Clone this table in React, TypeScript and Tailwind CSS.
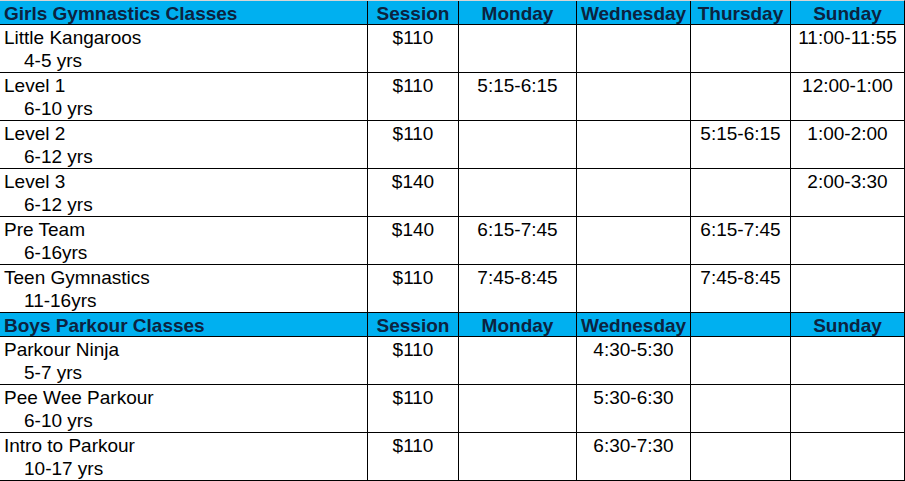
type Row = {
  name: string
  age: string
  price: string
  times: string[]
}

const girls: Row[] = [
  { name: 'Little Kangaroos', age: '4-5 yrs', price: '$110', times: ['', '', '', '11:00-11:55'] },
  { name: 'Level 1', age: '6-10 yrs', price: '$110', times: ['5:15-6:15', '', '', '12:00-1:00'] },
  { name: 'Level 2', age: '6-12 yrs', price: '$110', times: ['', '', '5:15-6:15', '1:00-2:00'] },
  { name: 'Level 3', age: '6-12 yrs', price: '$140', times: ['', '', '', '2:00-3:30'] },
  { name: 'Pre Team', age: '6-16yrs', price: '$140', times: ['6:15-7:45', '', '6:15-7:45', ''] },
  { name: 'Teen Gymnastics', age: '11-16yrs', price: '$110', times: ['7:45-8:45', '', '7:45-8:45', ''] },
]

const boys: Row[] = [
  { name: 'Parkour Ninja', age: '5-7 yrs', price: '$110', times: ['', '4:30-5:30', '', ''] },
  { name: 'Pee Wee Parkour', age: '6-10 yrs', price: '$110', times: ['', '5:30-6:30', '', ''] },
  { name: 'Intro to Parkour', age: '10-17 yrs', price: '$110', times: ['', '6:30-7:30', '', ''] },
]

function Header({ title, cols }: { title: string; cols: string[] }) {
  return (
    <>
      <div className="h-[23px] bg-[#00b0f0] pl-[4px] pt-[2px] text-left font-bold leading-[21px] text-[#0c2340]">
        {title}
      </div>
      {cols.map((c, i) => (
        <div
          key={i}
          className="h-[23px] overflow-visible whitespace-nowrap bg-[#00b0f0] pt-[2px] text-center font-bold leading-[21px] text-[#0c2340]"
        >
          {c}
        </div>
      ))}
    </>
  )
}

function ClassRow({ row }: { row: Row }) {
  return (
    <>
      <div className="h-[47px] bg-white pl-[4px] pt-[1px] leading-[23px]">
        <div>{row.name}</div>
        <div className="pl-[20px]">{row.age}</div>
      </div>
      <div className="h-[47px] bg-white pt-[1px] text-center leading-[23px]">{row.price}</div>
      {row.times.map((t, i) => (
        <div key={i} className="h-[47px] whitespace-nowrap bg-white pt-[1px] text-center leading-[23px]">
          {t}
        </div>
      ))}
    </>
  )
}

export default function App() {
  return (
    <div className="h-[481px] w-[905px] overflow-hidden bg-white font-['Liberation_Sans',Arial,sans-serif] text-[19px] text-black">
      <div className="grid grid-cols-[367px_90px_117px_113px_99px_113px] gap-px border-t border-r border-b border-t-[#d6d6d6] border-r-black border-b-black bg-black">
        <Header title="Girls Gymnastics Classes" cols={['Session', 'Monday', 'Wednesday', 'Thursday', 'Sunday']} />
        {girls.map((r) => (
          <ClassRow key={r.name} row={r} />
        ))}
        <Header title="Boys Parkour Classes" cols={['Session', 'Monday', 'Wednesday', '', 'Sunday']} />
        {boys.map((r) => (
          <ClassRow key={r.name} row={r} />
        ))}
      </div>
    </div>
  )
}
